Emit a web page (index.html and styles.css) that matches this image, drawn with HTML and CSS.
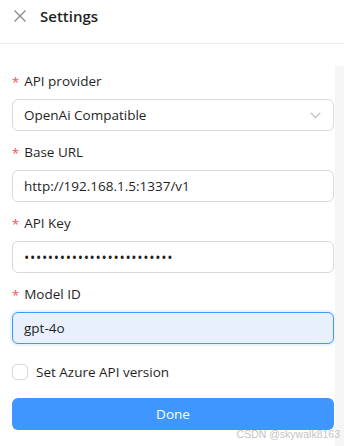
FILE: index.html
```html
<!DOCTYPE html>
<html>
<head>
<meta charset="utf-8">
<link rel="stylesheet" href="styles.css">
</head>
<body>
<div class="panel">
  <header class="header">
    <svg class="close" width="14" height="14" viewBox="0 0 14 14"><path d="M1.5 1.5 L12.5 12.5 M12.5 1.5 L1.5 12.5" stroke="#8a8a8a" stroke-width="1.4" fill="none"/></svg>
    <span class="title">Settings</span>
  </header>
  <main class="form">
    <div class="item">
      <label class="label"><span class="req">*</span>API provider</label>
      <div class="field select">
        <span>OpenAi Compatible</span>
        <svg class="chev" width="11" height="7" viewBox="0 0 11 7"><path d="M0.8 0.8 L5.5 5.6 L10.2 0.8" stroke="#b8b8b8" stroke-width="1.1" fill="none"/></svg>
      </div>
    </div>
    <div class="item">
      <label class="label"><span class="req">*</span>Base URL</label>
      <div class="field">http://192.168.1.5:1337/v1</div>
    </div>
    <div class="item">
      <label class="label"><span class="req">*</span>API Key</label>
      <div class="field dots">•••••••••••••••••••••••••</div>
    </div>
    <div class="item">
      <label class="label"><span class="req">*</span>Model ID</label>
      <div class="field focused">gpt-4o</div>
    </div>
    <div class="check">
      <span class="box"></span>
      <span>Set Azure API version</span>
    </div>
    <button class="done">Done</button>
  </main>
  <div class="scroll"></div>
  <div class="mark">CSDN @skywalk8163</div>
</div>
</body>
</html>
```
FILE: styles.css
```css
* { box-sizing: border-box; }
html, body { margin: 0; padding: 0; background: #fff; }
body {
  font-family: "Open Sans", "Noto Sans", sans-serif;
  color: rgba(0,0,0,0.88);
  width: 344px;
  height: 446px;
  overflow: hidden;
}
.panel { position: relative; width: 344px; height: 446px; }
.header {
  height: 44px;
  display: flex;
  align-items: center;
  padding: 0 0 11px 13px;
  border-bottom: 1px solid #ececec;
  gap: 13px;
}
.close { flex: none; }
.title { font-size: 15px; font-weight: 600; color: #1f1f1f; }
.form {
  width: 335px;
  padding: 26px 1px 0 12px;
  display: flex;
  flex-direction: column;
}
.item { display: flex; flex-direction: column; margin-bottom: 10px; }
.label {
  font-size: 13.5px;
  height: 22px;
  line-height: 22px;
  margin-bottom: 7px;
  display: flex;
  align-items: center;
  color: #1f1f1f;
}
.req { color: #ff4d4f; font-size: 13px; margin-right: 5px; margin-top: 2px; }
.field {
  height: 32px;
  border: 1px solid #d9d9d9;
  border-radius: 6px;
  padding: 0 11px;
  display: flex;
  align-items: center;
  font-size: 13.5px;
  color: #1f1f1f;
}
.select { justify-content: space-between; }
.chev { margin-right: 1px; }
.dots { letter-spacing: 0.7px; font-size: 14px; }
.focused {
  background: #e8f0fe;
  border-color: #4096ff;
  box-shadow: 0 0 0 2px rgba(5,145,255,0.1);
}
.check {
  display: flex;
  align-items: center;
  gap: 8px;
  font-size: 13.5px;
  height: 22px;
  margin-top: 7px;
  color: #1f1f1f;
}
.box {
  width: 16px; height: 16px;
  border: 1px solid #d9d9d9;
  border-radius: 4px;
  flex: none;
}
.done {
  margin-top: 15px;
  height: 32px;
  border: none;
  border-radius: 6px;
  background: #4096ff;
  color: #fff;
  font-family: inherit;
  font-size: 13.5px;
}
.scroll {
  position: absolute;
  right: 0; top: 66px; bottom: 0;
  width: 9px;
  background: #f5f5f5;
}
.mark {
  position: absolute;
  right: 4px; bottom: 6px;
  font-family: "Liberation Sans", Arial, sans-serif;
  font-size: 10.5px;
  color: #c4c4c4;
}
```
